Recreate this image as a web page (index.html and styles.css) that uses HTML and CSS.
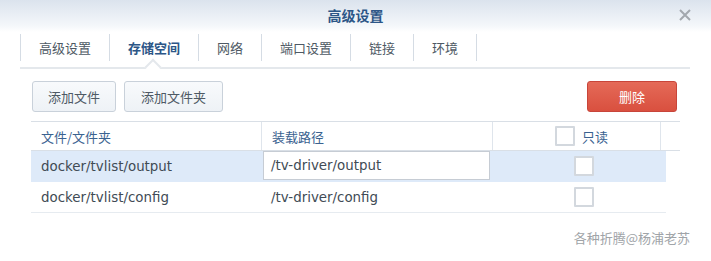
FILE: index.html
```html
<!DOCTYPE html>
<html lang="zh-CN">
<head>
<meta charset="utf-8">
<title>高级设置</title>
<link rel="stylesheet" href="styles.css">
</head>
<body>
<div class="window">
  <header class="titlebar">
    <h1 class="title">高级设置</h1>
    <span class="close" aria-label="关闭">
      <svg width="12" height="12" viewBox="0 0 12 12"><path d="M1 1 L11 11 M11 1 L1 11" stroke="#a3a8ae" stroke-width="2" fill="none"/></svg>
    </span>
  </header>

  <nav class="tabs">
    <span class="tab">高级设置</span>
    <span class="tab active">存储空间</span>
    <span class="tab">网络</span>
    <span class="tab">端口设置</span>
    <span class="tab">链接</span>
    <span class="tab">环境</span>
  </nav>
  <div class="tab-rule"><span class="caret"></span></div>

  <div class="toolbar">
    <button class="btn">添加文件</button>
    <button class="btn">添加文件夹</button>
    <span class="spacer"></span>
    <button class="btn danger">删除</button>
  </div>

  <div class="grid">
    <div class="grid-head">
      <div class="cell c1">文件/文件夹</div>
      <div class="cell c2">装载路径</div>
      <div class="cell c3 head-ro"><span class="check"></span><span>只读</span></div>
      <div class="cell c4"></div>
    </div>
    <div class="row selected">
      <div class="cell c1">docker/tvlist/output</div>
      <div class="cell c2 edit"><span class="input">/tv-driver/output</span></div>
      <div class="cell c3 ro"><span class="check"></span></div>
    </div>
    <div class="row">
      <div class="cell c1">docker/tvlist/config</div>
      <div class="cell c2">/tv-driver/config</div>
      <div class="cell c3 ro"><span class="check"></span></div>
    </div>
  </div>

  <div class="watermark">各种折腾@杨浦老苏</div>
</div>
</body>
</html>
```

FILE: styles.css
```css
* { box-sizing: border-box; }
html, body { margin: 0; padding: 0; background: #fff; }
body {
  font-family: "DejaVu Sans", "Noto Sans CJK SC", sans-serif;
  font-size: 13px;
  color: #414b55;
}
.window { width: 711px; height: 261px; display: flex; flex-direction: column; }

.titlebar {
  height: 32px;
  background: linear-gradient(#dbe3ed, #f4f7fa 80%, #ffffff);
  display: flex; align-items: center; justify-content: center;
  position: relative;
}
.title {
  margin: 0; font-size: 14px; font-weight: bold; color: #2c5687;
  font-family: "Noto Sans CJK SC", sans-serif;
  line-height: 20px; margin-top: -2px;
}
.close { position: absolute; right: 20px; top: 9px; width: 12px; height: 12px; display: block; }
.close svg { display: block; }

.tabs { display: flex; margin: 2px 0 0 20px; height: 27px; }
.tab {
  font-family: "Noto Sans CJK SC", sans-serif;
  padding: 0 18px; border-left: 1px solid #d5dce4;
  line-height: 27px; color: #4e5964; font-size: 13px;
}
.tab:last-child { border-right: 1px solid #d5dce4; }
.tab.active { color: #2c5687; font-weight: bold; }

.tab-rule {
  margin: 6px 0 0 20px; width: 670px; height: 2px;
  background: #e4e8ec; position: relative;
}
.caret {
  position: absolute; left: 127px; top: -6px; width: 12px; height: 12px;
  background: #fff; border-top: 2px solid #e4e8ec; border-left: 2px solid #e4e8ec;
  transform: rotate(45deg);
}

.toolbar { display: flex; margin: 12px 0 0 32px; width: 645px; gap: 8px; }
.spacer { flex: 1; }
.btn {
  height: 31px; padding: 0 14px;
  font-family: "Noto Sans CJK SC", sans-serif; font-size: 13px; color: #4e5964;
  background: linear-gradient(#f8fafc, #eef2f6);
  border: 1px solid #c9d1da; border-radius: 3px;
}
.btn:first-child { width: 84px; }
.btn:nth-child(2) { width: 99px; }
.btn.danger {
  width: 90px; color: #fff;
  background: linear-gradient(#e56a58, #d9503f);
  border-color: #c8453a;
}

.grid { margin: 9px 0 0 31px; }
.grid-head {
  display: flex; width: 649px; height: 30px;
  border-top: 1px solid #d9dfe6; border-bottom: 1px solid #d9dfe6;
  color: #3a6290;
}
.grid-head .cell { border-right: 1px solid #dfe5ec; }
.grid-head .c4 { border-right: none; }
.cell { display: flex; align-items: center; padding-left: 10px; white-space: nowrap; }
.grid-head .c1, .grid-head .c2, .grid-head .head-ro span:last-child { font-family: "Noto Sans CJK SC", sans-serif; }
.c1 { width: 231px; }
.c2 { width: 231px; }
.c3 { width: 168px; }
.c4 { width: 19px; }
.head-ro { padding-left: 62px; gap: 7px; }

.row { display: flex; width: 635px; height: 31px; border-bottom: 1px solid #e6ebf0; }
.row.selected { background: #deeaf9; border-bottom-color: #deeaf9; }
.row .cell { font-size: 13.4px; }
.row .c2 { padding-left: 9px; }
.row .c2.edit { padding: 0 3px 1px 1px; align-items: stretch; }
.input {
  flex: 1; background: #fff; border: 1px solid #c6ccd4;
  display: flex; align-items: center; padding-left: 7px;
}
.ro { padding-left: 81px; }

.check {
  width: 20px; height: 20px; display: inline-block;
  border: 2px solid #d3d8de; background: #fff; border-radius: 1px;
}

.watermark {
  margin: 15px 0 0 0; width: 690px; text-align: right;
  font-family: "Noto Sans CJK SC", sans-serif; font-size: 13px; color: #a0a4a8;
}
```
